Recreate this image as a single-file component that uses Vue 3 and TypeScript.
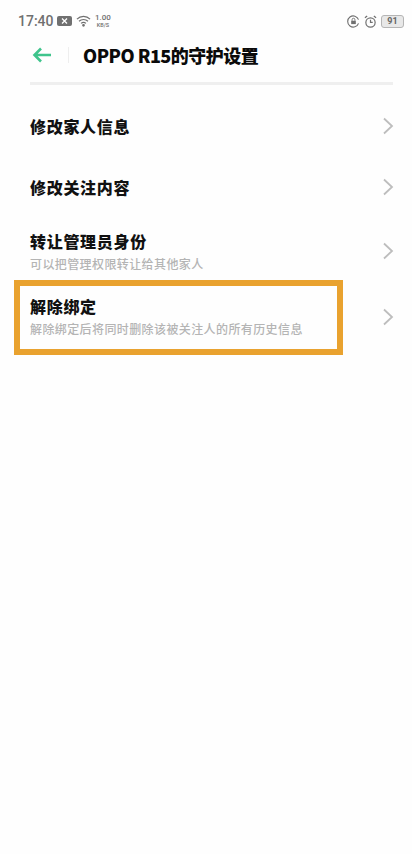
<script setup lang="ts">
interface Row { title: string; sub?: string; cls: string }
const rows: Row[] = [
  { title: '修改家人信息', cls: 'r1' },
  { title: '修改关注内容', cls: 'r2' },
  { title: '转让管理员身份', sub: '可以把管理权限转让给其他家人', cls: 'r3' },
  { title: '解除绑定', sub: '解除绑定后将同时删除该被关注人的所有历史信息', cls: 'r4' },
]
</script>

<template>
  <div class="page">
    <div class="status">
      <span class="time">17:40</span>
      <svg class="ic-msg" width="15" height="10" viewBox="0 0 15 10"><rect width="15" height="10" rx="2" fill="#707070"/><path d="M5 2.500l5 5M10 2.500l-5 5" stroke="#fff" stroke-width="1.3"/></svg>
      <svg class="ic-wifi" width="15" height="12" viewBox="0 0 16 12" fill="none" stroke="#707070" stroke-width="1.3"><path d="M1 4a10 10 0 0 1 14 0M3.200 6.300a7 7 0 0 1 9.600 0M5.400 8.500a4 4 0 0 1 5.200 0"/><circle cx="8" cy="10.600" r=".8" fill="#707070"/></svg>
      <span class="speed"><b>1.00</b><b>KB/S</b></span>
      <span class="spacer"></span>
      <svg class="ic-lock" width="13" height="13" viewBox="0 0 14 14" fill="none" stroke="#707070" stroke-width="1.2"><path d="M12.400 9A6 6 0 1 1 12.400 5"/><rect x="4.500" y="6.200" width="5" height="3.600" fill="#707070" stroke="none"/><path d="M5.500 6.200V5a1.500 1.500 0 0 1 3 0v1.200" stroke-width="1"/></svg>
      <svg class="ic-alarm" width="13" height="13" viewBox="0 0 14 14" fill="none" stroke="#707070" stroke-width="1.3"><circle cx="7" cy="8" r="5"/><path d="M7 5.200V8h2.400M1 3l2.400-2M13 3l-2.400-2"/></svg>
      <span class="battery">91</span>
    </div>

    <header class="head">
      <svg class="back" width="20" height="16" viewBox="0 0 20 16" fill="none" stroke="#3fc48c" stroke-width="2.600"><path d="M19 8H3M9 1.500L2.500 8 9 14.500"/></svg>
      <span class="sep"></span>
      <h1 class="head-title">OPPO R15的守护设置</h1>
    </header>
    <div class="divider"></div>

    <div v-for="row in rows" :key="row.title" class="row" :class="row.cls">
      <div class="text">
        <div class="title">{{ row.title }}</div>
        <div v-if="row.sub" class="sub">{{ row.sub }}</div>
      </div>
      <svg class="chev" width="12" height="18" viewBox="0 0 12 18" fill="none" stroke="#bdbdbd" stroke-width="1.800"><path d="M2 1.500L10 9 2 16.500"/></svg>
      <div v-if="row.cls === 'r4'" class="highlight"></div>
    </div>
  </div>
</template>

<style>
html, body { margin: 0; background: #fff; }
</style>

<style scoped>
.page {
  width: 412px;
  height: 854px;
  background: #fefefe;
  font-family: "Noto Sans CJK SC", "Liberation Sans", sans-serif;
  overflow: hidden;
  color: #111;
}
.status {
  height: 26px;
  margin-top: 8px;
  padding: 0 8px 0 18px;
  display: flex;
  align-items: center;
  color: #707070;
}
.time { font: 500 14px "Roboto", sans-serif; width: 39px; }
.ic-wifi { margin-left: 4px; }
.speed {
  margin-left: 4px;
  display: flex;
  flex-direction: column;
  align-items: center;
  font-family: "Roboto", sans-serif;
  font-size: 8px;
  line-height: 8px;
}
.speed b { font-weight: 500; }
.speed b + b { font-size: 5.500px; line-height: 6px; }
.spacer { flex: 1; }
.ic-alarm { margin-left: 4px; }
.battery {
  margin-left: 4px;
  width: 21px;
  height: 11px;
  border: 1px solid #b5b5b5;
  border-radius: 3px;
  background: #e8e8e8;
  font: 700 9px/11px "Roboto", sans-serif;
  text-align: center;
  color: #666;
}
.head {
  height: 42px;
  padding-left: 32px;
  display: flex;
  align-items: center;
}
.sep { width: 1px; height: 16px; background: #eee; margin-left: 16px; }
.head-title {
  margin: 0 0 0 14px;
  font-size: 18px;
  font-weight: 900;
  letter-spacing: -.5px;
  color: #0a0a0a;
}
.divider { height: 3px; margin: 6px 19px 0 30px; background: #efefef; }
.row {
  position: relative;
  display: flex;
  align-items: center;
  justify-content: space-between;
  padding: 0 18px 0 30px;
}
.r1 { height: 61px; margin-top: 10px; }
.r2 { height: 61px; }
.r3 { height: 59px; margin-top: 4px; }
.r4 { height: 75px; }
.title { font-size: 16px; font-weight: 900; letter-spacing: .7px; line-height: 22px; color: #111; }
.sub { margin-top: 3px; font-size: 12px; letter-spacing: .4px; line-height: 17px; color: #b4b4b4; font-weight: 500; }
.r4 .text { margin-bottom: 4px; }
.r4 .chev { margin-bottom: 1px; }
.highlight {
  position: absolute;
  left: 14px;
  top: 0;
  width: 329px;
  height: 75px;
  box-sizing: border-box;
  border: 6px solid #e9a22f;
  pointer-events: none;
}
</style>
